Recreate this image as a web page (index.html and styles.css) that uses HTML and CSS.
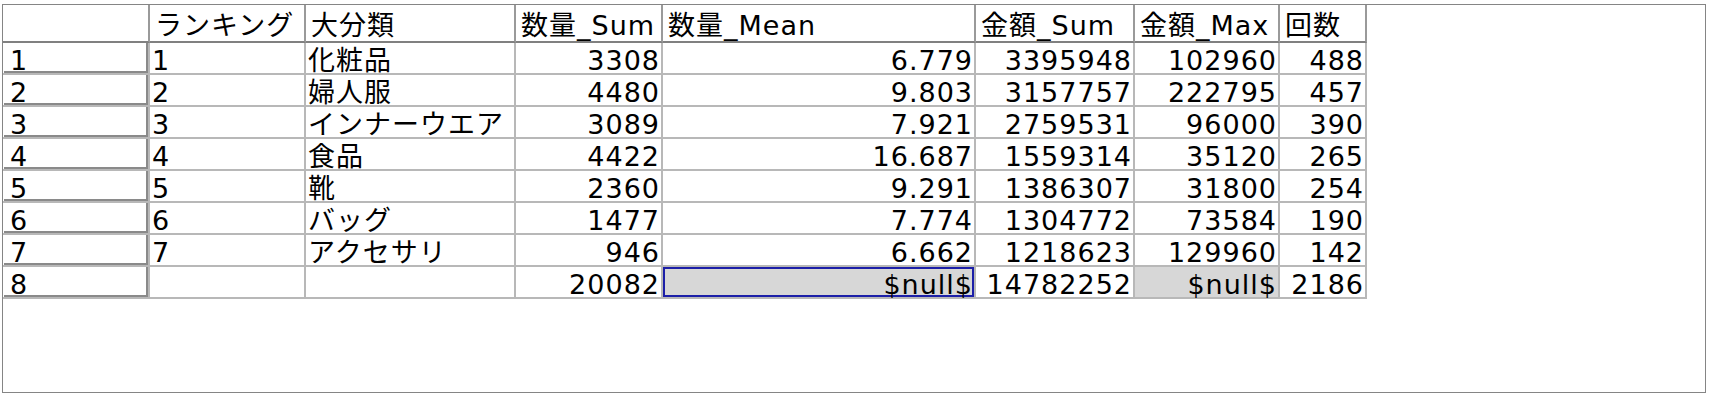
FILE: index.html
```html
<!DOCTYPE html>
<html lang="ja">
<head>
<meta charset="utf-8">
<title>集計表</title>
<link rel="stylesheet" href="styles.css">
</head>
<body>
<div class="pane">
  <div class="sheet">
    <div class="hc"></div>
    <div class="hc">ランキング</div>
    <div class="hc">大分類</div>
    <div class="hc">数量_Sum</div>
    <div class="hc">数量_Mean</div>
    <div class="hc">金額_Sum</div>
    <div class="hc">金額_Max</div>
    <div class="hc">回数</div>

    <div class="rh"><span class="rhb">1</span></div>
    <div class="c">1</div><div class="c">化粧品</div><div class="c num">3308</div><div class="c num">6.779</div><div class="c num">3395948</div><div class="c num">102960</div><div class="c num">488</div>

    <div class="rh"><span class="rhb">2</span></div>
    <div class="c">2</div><div class="c">婦人服</div><div class="c num">4480</div><div class="c num">9.803</div><div class="c num">3157757</div><div class="c num">222795</div><div class="c num">457</div>

    <div class="rh"><span class="rhb">3</span></div>
    <div class="c">3</div><div class="c">インナーウエア</div><div class="c num">3089</div><div class="c num">7.921</div><div class="c num">2759531</div><div class="c num">96000</div><div class="c num">390</div>

    <div class="rh"><span class="rhb">4</span></div>
    <div class="c">4</div><div class="c">食品</div><div class="c num">4422</div><div class="c num">16.687</div><div class="c num">1559314</div><div class="c num">35120</div><div class="c num">265</div>

    <div class="rh"><span class="rhb">5</span></div>
    <div class="c">5</div><div class="c">靴</div><div class="c num">2360</div><div class="c num">9.291</div><div class="c num">1386307</div><div class="c num">31800</div><div class="c num">254</div>

    <div class="rh"><span class="rhb">6</span></div>
    <div class="c">6</div><div class="c">バッグ</div><div class="c num">1477</div><div class="c num">7.774</div><div class="c num">1304772</div><div class="c num">73584</div><div class="c num">190</div>

    <div class="rh"><span class="rhb">7</span></div>
    <div class="c">7</div><div class="c">アクセサリ</div><div class="c num">946</div><div class="c num">6.662</div><div class="c num">1218623</div><div class="c num">129960</div><div class="c num">142</div>

    <div class="rh"><span class="rhb">8</span></div>
    <div class="c"></div><div class="c"></div><div class="c num">20082</div><div class="c num grey focus">$null$</div><div class="c num">14782252</div><div class="c num grey">$null$</div><div class="c num">2186</div>
  </div>
</div>
</body>
</html>
```

FILE: styles.css
```css
html, body {
  margin: 0;
  padding: 0;
  background: #ffffff;
}

.pane {
  box-sizing: border-box;
  margin: 4px 0 0 2px;
  width: 1704px;
  height: 389px;
  border: 1px solid #858585;
  background: #ffffff;
}

.sheet {
  display: grid;
  grid-template-columns: 147px 156px 210px 147px 313px 159px 145px 87px;
  grid-template-rows: 38px repeat(8, 32px);
  width: max-content;
  font-family: "DejaVu Sans", "Noto Sans CJK JP", sans-serif;
  font-size: 27px;
  line-height: 30px;
  letter-spacing: 1px;
  color: #000000;
}

.hc {
  box-sizing: border-box;
  padding: 5.6px 0 0 5px;
  border-right: 2px solid #9a9a9a;
  border-bottom: 2px solid #808080;
  white-space: nowrap;
  background: #ffffff;
}

.c {
  box-sizing: border-box;
  padding: 2.7px 1px 0 2px;
  border-right: 2px solid #b8b8b8;
  border-bottom: 2px solid #b8b8b8;
  white-space: nowrap;
}

.num {
  text-align: right;
}

.grey {
  background: #d7d7d7;
}

.focus {
  box-shadow: inset 0 0 0 2px #1c1fa8;
}

.rh {
  box-sizing: border-box;
  border-right: 2px solid #b8b8b8;
  border-bottom: 2px solid #b8b8b8;
}

.rhb {
  display: block;
  box-sizing: border-box;
  height: 100%;
  margin-left: 1px;
  padding: 2.7px 0 0 6px;
  border-right: 2px solid #8a8a8a;
  border-bottom: 2px solid #8a8a8a;
}
```
